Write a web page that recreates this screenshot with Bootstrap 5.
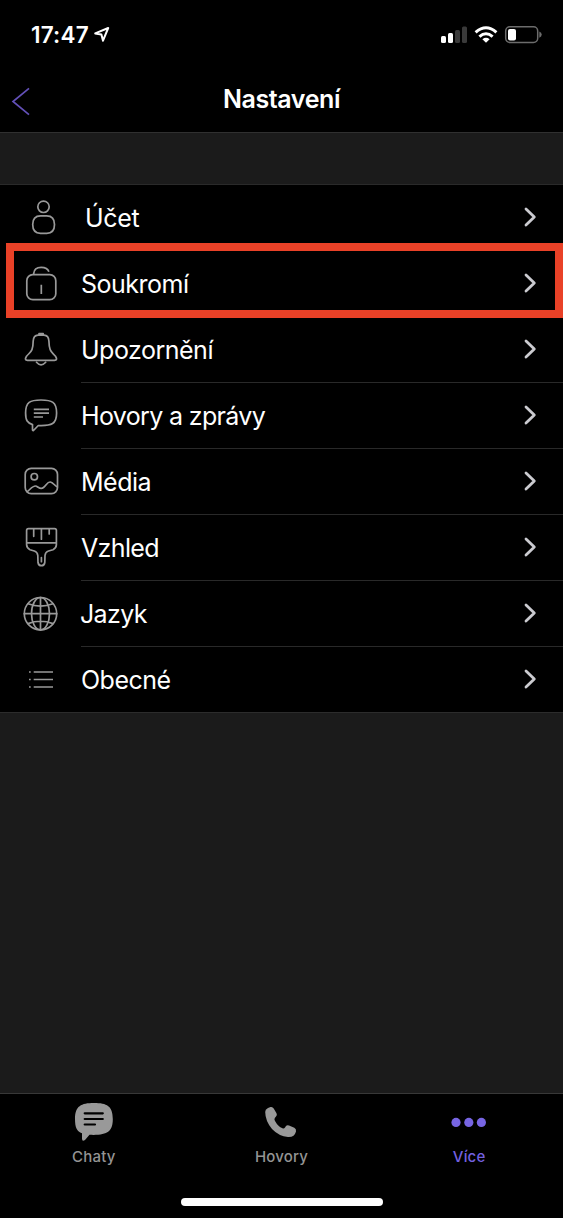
<!DOCTYPE html>
<html lang="cs" data-bs-theme="dark">
<head>
<meta charset="utf-8">
<meta name="viewport" content="width=device-width, initial-scale=1">
<title>Nastavení</title>
<link href="https://cdn.jsdelivr.net/npm/bootstrap@5.3.0/dist/css/bootstrap.min.css" rel="stylesheet">
<style>
  body { background: #1b1b1b; color: #fff; font-family: Inter, "Liberation Sans", sans-serif; height: 1218px; overflow: hidden; }
  svg { display: block; flex: none; }
  .status-bar { height: 68px; }
  .clock { font-size: 22.5px; font-weight: 600; line-height: 28px; letter-spacing: .2px; width: 58px; margin: 21px 0 0 31px; }
  .location { margin-left: 4px; }
  .title-bar { height: 64px; }
  .title-bar h1 { font-size: 25px; font-weight: 600; line-height: 30px; letter-spacing: -.4px; }
  .gap-strip { height: 53px; border-top: 1px solid #303030; border-bottom: 1px solid #2a2a2a; }
  .settings { border-bottom: 1px solid #2c2c2c; }
  .settings-row { height: 66px; color: #fff; }
  .settings-row:last-child { height: 65px; }
  .row-body { margin-left: 81px; border-bottom: 1px solid #292929; padding-right: 26px; }
  .settings-row:last-child .row-body { border: 0; }
  .row-icon { position: absolute; left: 0; top: 0; fill: none; stroke: #999; stroke-width: 1.7; stroke-linecap: round; stroke-linejoin: round; }
  .row-label { font-size: 25px; line-height: 30px; letter-spacing: -.5px; }
  .label-wide { letter-spacing: -.3px; }
  .label-tight { letter-spacing: -.65px; }
  .chevron { fill: none; stroke: #cbcbd0; stroke-width: 2.8; stroke-linecap: round; stroke-linejoin: round; }
  .highlight { position: absolute; left: 6px; right: 0; top: -8px; height: 75px; border: 8px solid #e94127; z-index: 2; }
  .tab-bar { height: 125px; border-top: 1px solid #383838; }
  .tab-item { color: #949494; font-size: 15px; font-weight: 500; line-height: 19px; letter-spacing: .2px; }
  .tab-item.active { color: #7360e0; }
  .home-line { width: 202px; height: 8px; margin-top: 32px; }
</style>
</head>
<body class="d-flex flex-column">
<header class="bg-black">
  <div class="status-bar d-flex">
    <div class="clock">17:47</div>
    <svg width="20" height="68" fill="none" stroke="#fff" stroke-width="2" stroke-linejoin="round" class="location me-auto"><path d="M2.2 33.4L15.2 28L10 40.7L8.4 34.6Z"/></svg>
    <svg width="122" height="68" viewBox="441 0 122 68">
      <g fill="#fff"><rect x="441" y="36" width="5" height="7" rx="1.5"/><rect x="448" y="33" width="5" height="10" rx="1.5"/></g>
      <g fill="#3a3a3a"><rect x="455" y="30" width="5" height="13" rx="1.5"/><rect x="462" y="26.5" width="5" height="16.5" rx="1.5"/></g>
      <g fill="none" stroke="#fff" stroke-width="3"><path d="M475.6 32.4Q486 23.2 496.4 32.4"/><path d="M479.4 36.6Q486 30.8 492.6 36.6"/></g>
      <path d="M482.4 39.2Q486 36.3 489.6 39.2L486 42.7Z" fill="#fff"/>
      <rect x="505.7" y="26.7" width="32" height="15.8" rx="4.2" fill="none" stroke="#6c6c6c" stroke-width="1.5"/>
      <rect x="508" y="29" width="8" height="11.5" rx="2" fill="#fff"/>
      <path d="M539.3 31.5Q541.7 32.4 541.7 34.6Q541.7 36.8 539.3 37.7Z" fill="#6c6c6c"/>
    </svg>
  </div>
  <div class="title-bar position-relative text-center">
    <svg class="position-absolute top-0 start-0" width="40" height="64" fill="none" stroke="#6350b8" stroke-width="1.7"><path d="M29 20.3L13 33.5L29 46.7"/></svg>
    <h1 class="m-0 pt-3">Nastavení</h1>
  </div>
</header>
<div class="gap-strip"></div>
<main class="settings bg-black">
  <a class="settings-row d-block position-relative text-decoration-none">
    <svg class="row-icon" width="81" height="65"><circle cx="43.5" cy="21.8" r="5.7"/><path d="M40.5 30.8H46.7Q54.5 30.8 54.5 39.5Q54.5 48.3 46.7 48.3H40.5Q32.7 48.3 32.7 39.5Q32.7 30.8 40.5 30.8Z"/></svg>
    <div class="row-body h-100 d-flex align-items-center justify-content-between"><span class="row-label label-wide ms-1">Účet</span><svg class="chevron" width="14" height="25"><path d="M3 4L11.3 12L3 20"/></svg></div>
  </a>
  <a class="settings-row d-block position-relative text-decoration-none">
    <svg class="row-icon" width="81" height="65"><rect x="26.8" y="23.7" width="29" height="25" rx="6"/><path d="M33.7 23.5V22.5Q34.2 16.3 41.2 16.3Q47.5 16.3 48.9 20.7M41.3 33.8V43" stroke-linecap="butt"/></svg>
    <div class="row-body h-100 d-flex align-items-center justify-content-between"><span class="row-label">Soukromí</span><svg class="chevron" width="14" height="25"><path d="M3 4L11.3 12L3 20"/></svg></div>
    <span class="highlight"></span>
  </a>
  <a class="settings-row d-block position-relative text-decoration-none">
    <svg class="row-icon" width="81" height="65"><path d="M39 16.7H43.2M38 18.2H44Q48.6 18.5 48.9 24C49.2 35 51.5 34.5 55.5 39.3Q58 43.3 54.5 43.3H27.5Q24 43.3 26.5 39.3C30.5 34.5 33 35 33.2 24Q33.5 18.5 38 18.2ZM36.5 45.3Q41 50.5 45.7 45.3"/></svg>
    <div class="row-body h-100 d-flex align-items-center justify-content-between"><span class="row-label">Upozornění</span><svg class="chevron" width="14" height="25"><path d="M3 4L11.3 12L3 20"/></svg></div>
  </a>
  <a class="settings-row d-block position-relative text-decoration-none">
    <svg class="row-icon" width="81" height="65"><path d="M41 17C52 17 56.6 19 56.6 30C56.6 41 52 43 38.3 42.5L33.5 47.5Q32.5 48 32.5 46.5V41.6C27.5 40 25.6 37.5 25.6 30C25.6 19 30 17 41 17Z"/><path d="M33.8 26.3H49M33.8 30.1H49M33.8 34H43" stroke-linecap="butt"/></svg>
    <div class="row-body h-100 d-flex align-items-center justify-content-between"><span class="row-label label-tight">Hovory a zprávy</span><svg class="chevron" width="14" height="25"><path d="M3 4L11.3 12L3 20"/></svg></div>
  </a>
  <a class="settings-row d-block position-relative text-decoration-none">
    <svg class="row-icon" width="81" height="65"><rect x="25.2" y="19.4" width="32.3" height="25.2" rx="6"/><circle cx="34.3" cy="27.7" r="3.2"/><path d="M27.3 42.7C31 39.5 33.5 35.8 36.5 37.2C39 38.5 40.5 41 43.5 38.5C46.5 36 47.5 32.6 50.3 33C53 33.4 54.5 36.5 57 37.7"/></svg>
    <div class="row-body h-100 d-flex align-items-center justify-content-between"><span class="row-label">Média</span><svg class="chevron" width="14" height="25"><path d="M3 4L11.3 12L3 20"/></svg></div>
  </a>
  <a class="settings-row d-block position-relative text-decoration-none">
    <svg class="row-icon" width="81" height="65"><path d="M28.5 13.7H54.5Q56.4 13.7 56.4 15.6V29.5Q56.4 33 53 34.7L48.5 36Q45.3 37 45 40.5L44.8 47.5Q44.3 50.7 41.4 50.7Q38.5 50.7 38 47.5L37.8 40.5Q37.5 37 34.3 36L30 34.7Q26.6 33 26.6 29.5V15.6Q26.6 13.7 28.5 13.7ZM26.6 27.8H56.4M33.7 14V21.3M41.4 14V24.2M49.2 14V19M41.4 42.5V46.7"/></svg>
    <div class="row-body h-100 d-flex align-items-center justify-content-between"><span class="row-label label-tight">Vzhled</span><svg class="chevron" width="14" height="25"><path d="M3 4L11.3 12L3 20"/></svg></div>
  </a>
  <a class="settings-row d-block position-relative text-decoration-none">
    <svg class="row-icon" width="81" height="65"><circle cx="40.5" cy="32.7" r="16.2"/><ellipse cx="40.5" cy="32.7" rx="9" ry="16.2"/><path d="M40.5 16.5V48.9M24.3 32.7H56.7M28 22.8Q40.5 27.5 53 22.8M28 42.6Q40.5 37.9 53 42.6"/></svg>
    <div class="row-body h-100 d-flex align-items-center justify-content-between"><span class="row-label label-tight" style="margin-left:-1px">Jazyk</span><svg class="chevron" width="14" height="25"><path d="M3 4L11.3 12L3 20"/></svg></div>
  </a>
  <a class="settings-row d-block position-relative text-decoration-none">
    <svg class="row-icon" width="81" height="65"><path d="M33.7 25H53M33.7 32.5H53M33.7 40H53M29 25H30.7M29 32.5H30.7M29 40H30.7" stroke-linecap="butt" stroke-width="1.7"/></svg>
    <div class="row-body h-100 d-flex align-items-center justify-content-between"><span class="row-label">Obecné</span><svg class="chevron" width="14" height="25"><path d="M3 4L11.3 12L3 20"/></svg></div>
  </a>
</main>
<footer class="tab-bar bg-black mt-auto">
  <nav class="row g-0 text-center">
    <div class="tab-item col-4 d-flex flex-column align-items-center">
      <svg width="60" height="53" viewBox="64 1094 60 53"><path d="M94 1103C107 1103 112.8 1106 112.8 1119C112.8 1132 107 1135.5 89.5 1134.8L85 1140Q82 1142 82 1138.5V1133.2C77 1131.5 75 1128 75 1119C75 1106 81 1103 94 1103Z" fill="#999"/><path d="M84.7 1113.3H102.8M84.7 1119H102.8M84.7 1124.5H95" stroke="#000" stroke-width="2.2" stroke-linecap="round"/></svg>
      <span>Chaty</span>
    </div>
    <div class="tab-item col-4 d-flex flex-column align-items-center">
      <svg width="60" height="53" viewBox="251 1094 60 53"><path d="M265.2 1112Q265 1109.5 268 1108L270.5 1107Q272.6 1106.5 273.7 1108.5L276.5 1113.3Q277.5 1115 276 1116.5L274.8 1118Q274 1119.3 275 1121Q278 1126.5 282.5 1128.3Q284 1128.9 285 1127.5L286 1126Q287 1124.8 289 1125.4L294.3 1127.8Q296.5 1129 296 1131.5Q294.5 1137.4 288 1137Q279 1136.3 272 1129Q265.3 1121 265.2 1112Z" fill="#999"/></svg>
      <span>Hovory</span>
    </div>
    <div class="tab-item active col-4 d-flex flex-column align-items-center">
      <svg width="60" height="53" viewBox="439 1094 60 53" fill="#7765e3"><circle cx="456" cy="1122.4" r="4.6"/><circle cx="468.8" cy="1122.4" r="4.6"/><circle cx="481.4" cy="1122.4" r="4.6"/></svg>
      <span>Více</span>
    </div>
  </nav>
  <div class="home-line bg-white rounded-pill mx-auto"></div>
</footer>
<script src="https://cdn.jsdelivr.net/npm/bootstrap@5.3.0/dist/js/bootstrap.bundle.min.js"></script>
</body>
</html>
